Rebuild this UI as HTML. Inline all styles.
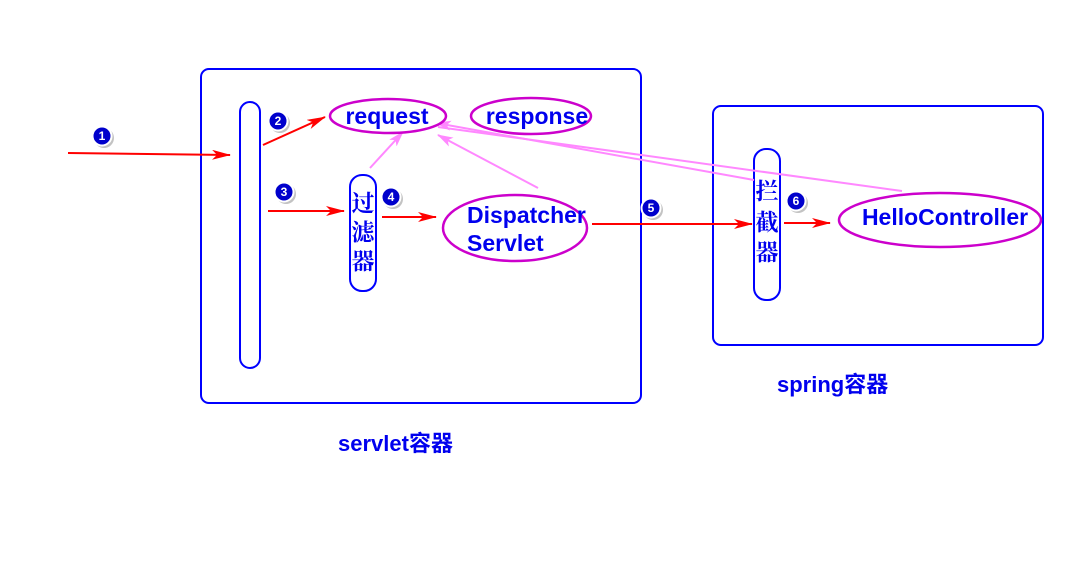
<!DOCTYPE html>
<html><head><meta charset="utf-8"><style>
body{margin:0;background:#fff;}
svg{display:block}
text{font-family:"Liberation Sans","Noto Sans CJK SC",sans-serif;font-weight:bold;fill:#0000ee}
.cj{font-family:"Noto Serif CJK SC","Noto Sans CJK SC",serif;font-weight:bold}
</style></head><body>
<svg width="1070" height="563" viewBox="0 0 1070 563" xmlns="http://www.w3.org/2000/svg">
<defs>
<marker id="ar2" markerWidth="20" markerHeight="10" refX="18" refY="5" orient="auto" markerUnits="userSpaceOnUse"><path d="M0,0 L19,5 L0,10 L5,5 Z" fill="#f00"/></marker>
<marker id="pa" markerWidth="16" markerHeight="10" refX="15" refY="5" orient="auto" markerUnits="userSpaceOnUse"><path d="M0,0 L16,5 L0,10 L4,5 Z" fill="#f8f"/></marker>
</defs>
<g fill="none" stroke="#0000ff" stroke-width="2">
<rect x="201" y="69" width="440" height="334" rx="8"/>
<rect x="713" y="106" width="330" height="239" rx="8"/>
<rect x="240" y="102" width="20" height="266" rx="10"/>
<rect x="350" y="175" width="26" height="116" rx="12"/>
<rect x="754" y="149" width="26" height="151" rx="12"/>
</g>
<g fill="none" stroke="#ff88ff" stroke-width="2">
<line x1="370" y1="168" x2="403" y2="132" marker-end="url(#pa)"/>
<line x1="538" y1="188" x2="438" y2="135" marker-end="url(#pa)"/>
<line x1="754" y1="180" x2="436" y2="123" marker-end="url(#pa)"/>
<line x1="902" y1="191" x2="438" y2="127"/>
</g>
<g stroke="#cc00cc" stroke-width="2.5" fill="#fff">
<ellipse cx="388" cy="116" rx="58" ry="17"/>
<ellipse cx="531" cy="116" rx="60" ry="18"/>
<ellipse cx="515" cy="228" rx="72" ry="33"/>
<ellipse cx="940" cy="220" rx="101" ry="27"/>
</g>
<g stroke="#f00" stroke-width="2" fill="none">
<line x1="68" y1="153" x2="230" y2="155" marker-end="url(#ar2)"/>
<line x1="263" y1="145" x2="325" y2="117" marker-end="url(#ar2)"/>
<line x1="268" y1="211" x2="344" y2="211" marker-end="url(#ar2)"/>
<line x1="382" y1="217" x2="436" y2="217" marker-end="url(#ar2)"/>
<line x1="592" y1="224" x2="752" y2="224" marker-end="url(#ar2)"/>
<line x1="784" y1="223" x2="830" y2="223" marker-end="url(#ar2)"/>
</g>
<g font-size="12">
<g><circle cx="104" cy="138" r="10" fill="#888" opacity=".5"/><circle cx="102" cy="136" r="9.5" fill="#0000cc" stroke="#fff" stroke-width="2"/><text x="102" y="140" text-anchor="middle" style="fill:#fff">1</text></g>
<g><circle cx="280" cy="123" r="10" fill="#888" opacity=".5"/><circle cx="278" cy="121" r="9.5" fill="#0000cc" stroke="#fff" stroke-width="2"/><text x="278" y="125" text-anchor="middle" style="fill:#fff">2</text></g>
<g><circle cx="286" cy="194" r="10" fill="#888" opacity=".5"/><circle cx="284" cy="192" r="9.5" fill="#0000cc" stroke="#fff" stroke-width="2"/><text x="284" y="196" text-anchor="middle" style="fill:#fff">3</text></g>
<g><circle cx="393" cy="199" r="10" fill="#888" opacity=".5"/><circle cx="391" cy="197" r="9.5" fill="#0000cc" stroke="#fff" stroke-width="2"/><text x="391" y="201" text-anchor="middle" style="fill:#fff">4</text></g>
<g><circle cx="653" cy="210" r="10" fill="#888" opacity=".5"/><circle cx="651" cy="208" r="9.5" fill="#0000cc" stroke="#fff" stroke-width="2"/><text x="651" y="212" text-anchor="middle" style="fill:#fff">5</text></g>
<g><circle cx="798" cy="203" r="10" fill="#888" opacity=".5"/><circle cx="796" cy="201" r="9.5" fill="#0000cc" stroke="#fff" stroke-width="2"/><text x="796" y="205" text-anchor="middle" style="fill:#fff">6</text></g>
</g>
<text x="387" y="124" font-size="23" text-anchor="middle">request</text>
<text x="537" y="124" font-size="23" text-anchor="middle">response</text>
<text x="467" y="223" font-size="23">Dispatcher</text>
<text x="467" y="251" font-size="23">Servlet</text>
<text x="945" y="225" font-size="23" text-anchor="middle">HelloController</text>
<text class="cj" x="363" y="211" font-size="23" text-anchor="middle">过</text>
<text class="cj" x="363" y="240" font-size="23" text-anchor="middle">滤</text>
<text class="cj" x="363" y="269" font-size="23" text-anchor="middle">器</text>
<text class="cj" x="767" y="199" font-size="23" text-anchor="middle">拦</text>
<text class="cj" x="767" y="230" font-size="23" text-anchor="middle">截</text>
<text class="cj" x="767" y="260" font-size="23" text-anchor="middle">器</text>
<text x="338" y="451" font-size="22">servlet容器</text>
<text x="777" y="392" font-size="22">spring容器</text>
</svg>
</body></html>
